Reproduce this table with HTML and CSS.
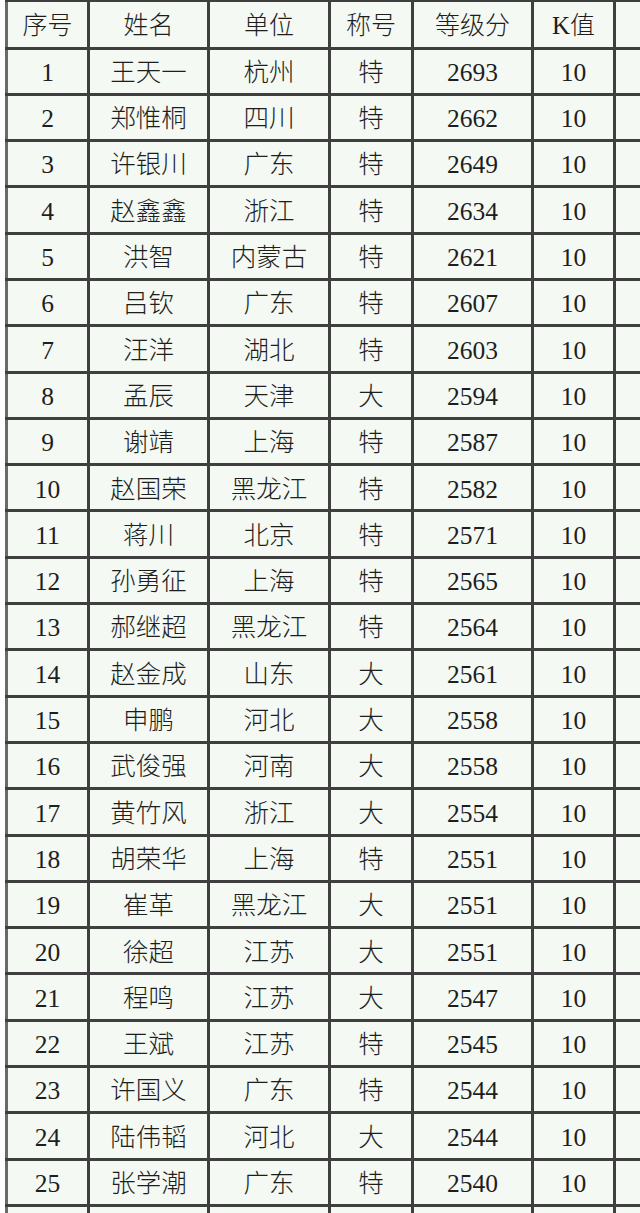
FILE: index.html
```html
<!DOCTYPE html>
<html lang="zh">
<head>
<meta charset="utf-8">
<title>等级分</title>
<link rel="stylesheet" href="styles.css">
</head>
<body>
<div class="wrap">
<table class="rank">
<colgroup>
<col class="c1"><col class="c2"><col class="c3"><col class="c4"><col class="c5"><col class="c6"><col class="c7">
</colgroup>
<thead>
<tr><th>序号</th><th>姓名</th><th>单位</th><th>称号</th><th>等级分</th><th>K值</th><th>场次</th></tr>
</thead>
<tbody>
<tr><td>1</td><td>王天一</td><td>杭州</td><td>特</td><td>2693</td><td>10</td><td></td></tr>
<tr><td>2</td><td>郑惟桐</td><td>四川</td><td>特</td><td>2662</td><td>10</td><td></td></tr>
<tr><td>3</td><td>许银川</td><td>广东</td><td>特</td><td>2649</td><td>10</td><td></td></tr>
<tr><td>4</td><td>赵鑫鑫</td><td>浙江</td><td>特</td><td>2634</td><td>10</td><td></td></tr>
<tr><td>5</td><td>洪智</td><td>内蒙古</td><td>特</td><td>2621</td><td>10</td><td></td></tr>
<tr><td>6</td><td>吕钦</td><td>广东</td><td>特</td><td>2607</td><td>10</td><td></td></tr>
<tr><td>7</td><td>汪洋</td><td>湖北</td><td>特</td><td>2603</td><td>10</td><td></td></tr>
<tr><td>8</td><td>孟辰</td><td>天津</td><td>大</td><td>2594</td><td>10</td><td></td></tr>
<tr><td>9</td><td>谢靖</td><td>上海</td><td>特</td><td>2587</td><td>10</td><td></td></tr>
<tr><td>10</td><td>赵国荣</td><td>黑龙江</td><td>特</td><td>2582</td><td>10</td><td></td></tr>
<tr><td>11</td><td>蒋川</td><td>北京</td><td>特</td><td>2571</td><td>10</td><td></td></tr>
<tr><td>12</td><td>孙勇征</td><td>上海</td><td>特</td><td>2565</td><td>10</td><td></td></tr>
<tr><td>13</td><td>郝继超</td><td>黑龙江</td><td>特</td><td>2564</td><td>10</td><td></td></tr>
<tr><td>14</td><td>赵金成</td><td>山东</td><td>大</td><td>2561</td><td>10</td><td></td></tr>
<tr><td>15</td><td>申鹏</td><td>河北</td><td>大</td><td>2558</td><td>10</td><td></td></tr>
<tr><td>16</td><td>武俊强</td><td>河南</td><td>大</td><td>2558</td><td>10</td><td></td></tr>
<tr><td>17</td><td>黄竹风</td><td>浙江</td><td>大</td><td>2554</td><td>10</td><td></td></tr>
<tr><td>18</td><td>胡荣华</td><td>上海</td><td>特</td><td>2551</td><td>10</td><td></td></tr>
<tr><td>19</td><td>崔革</td><td>黑龙江</td><td>大</td><td>2551</td><td>10</td><td></td></tr>
<tr><td>20</td><td>徐超</td><td>江苏</td><td>大</td><td>2551</td><td>10</td><td></td></tr>
<tr><td>21</td><td>程鸣</td><td>江苏</td><td>大</td><td>2547</td><td>10</td><td></td></tr>
<tr><td>22</td><td>王斌</td><td>江苏</td><td>特</td><td>2545</td><td>10</td><td></td></tr>
<tr><td>23</td><td>许国义</td><td>广东</td><td>特</td><td>2544</td><td>10</td><td></td></tr>
<tr><td>24</td><td>陆伟韬</td><td>河北</td><td>大</td><td>2544</td><td>10</td><td></td></tr>
<tr><td>25</td><td>张学潮</td><td>广东</td><td>特</td><td>2540</td><td>10</td><td></td></tr>
<tr><td></td><td></td><td></td><td></td><td></td><td></td><td></td></tr>
</tbody>
</table>
</div>
</body>
</html>
```

FILE: styles.css
```css
html, body {
  margin: 0;
  padding: 0;
  background: #fdfefd;
}
.wrap {
  width: 640px;
  height: 1213px;
  overflow: hidden;
  padding-left: 5px;
  box-sizing: border-box;
}
.rank {
  border-collapse: collapse;
  table-layout: fixed;
  width: 710px;
  margin-top: -1px;
  font-family: "Liberation Serif", "Noto Sans CJK SC", serif;
  font-size: 25.5px;
  color: #1e1e1e;
}
.c1 { width: 82px; }
.c2 { width: 120px; }
.c3 { width: 121px; }
.c4 { width: 83px; }
.c5 { width: 120px; }
.c6 { width: 82px; }
.c7 { width: 102px; }
.rank th, .rank td {
  border: 3px solid #3f3f3f;
  background: #f4f9f3;
  height: 40.3px;
  padding: 3px 0 0 0;
  text-align: center;
  vertical-align: middle;
  font-weight: 300;
  line-height: 1;
  white-space: nowrap;
  overflow: hidden;
}
.rank th {
  height: 41.5px;
  font-size: 25px;
}
.rank tr > *:first-child {
  border-left-color: #6a6a6a;
}
```
